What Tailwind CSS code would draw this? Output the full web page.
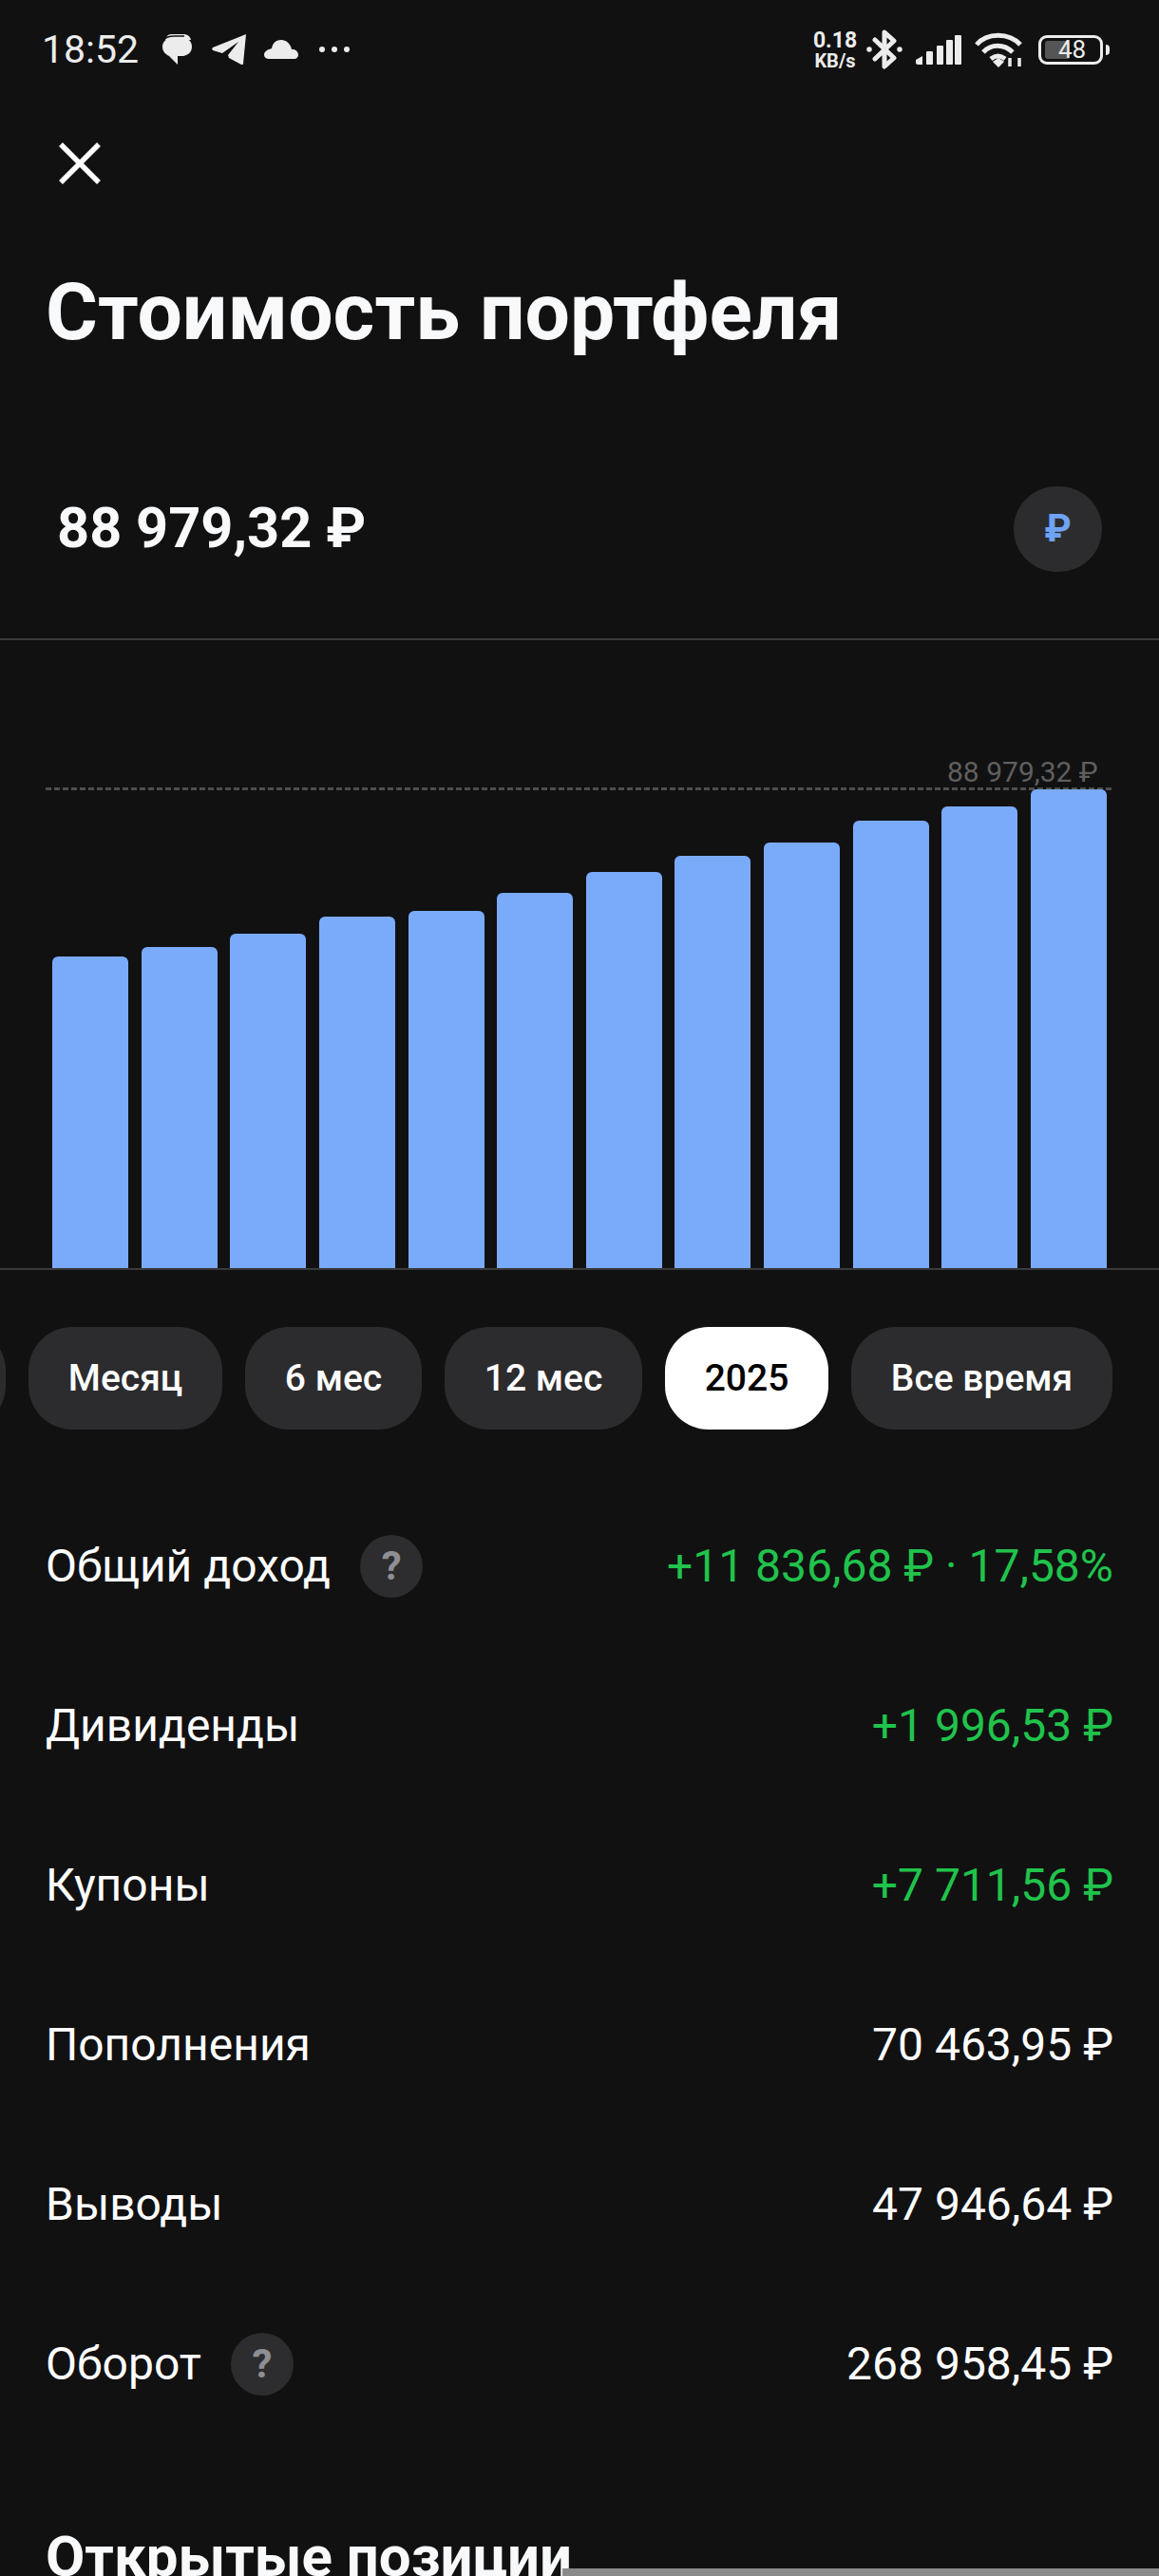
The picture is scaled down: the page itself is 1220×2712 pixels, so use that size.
<!DOCTYPE html>
<html lang="ru">
<head>
  <meta charset="UTF-8" />
  <meta name="viewport" content="width=device-width, initial-scale=1.0"/>
  <title>Стоимость портфеля</title>
  <script src="https://cdn.jsdelivr.net/npm/@tailwindcss/browser@4"></script>
</head>
<body class="bg-[#111112]">
  <div class="relative h-[2712px] w-[1220px] overflow-hidden bg-[#111112] font-[Roboto,sans-serif] text-white">

    <!-- status bar -->
    <div class="flex h-[104px] items-center justify-between pl-[44px] pr-[52px] text-[#ececec]">
      <div class="flex items-center">
        <span class="text-[41px] leading-none">18:52</span>
        <svg class="ml-[25px]" width="31" height="32" viewBox="0 0 31 32" fill="#ececec">
          <path d="M9 0h13c4 0 7 2 8 6H3C4 2 6 0 9 0z"/>
          <path d="M11 3h9c6 0 11 4 11 10s-4 9-9 10h-6v9l-9-9C3 21 0 18 0 13S5 3 11 3z"/>
          <path d="M1 6C4 3 8 2 12 2h11" fill="none" stroke="#111112" stroke-width="1.5"/>
        </svg>
        <svg class="ml-[21px]" width="36" height="32" viewBox="0 0 36 32" fill="#ececec">
          <path d="M36 0L33 31c0 1-1 1-2 1L18 25l-1-3L28 8 11 20 1 17c-1-1-1-2 0-3z"/>
        </svg>
        <svg class="ml-[19px]" width="36" height="20" viewBox="0 0 36 20" fill="#ececec">
          <path d="M5 20h27c2 0 4-2 4-4s-1-5-5-6c-1 0-2 0-2 0C28 4 23 0 18 0c-5 0-9 3-10 9-4 1-8 3-8 7 0 2 2 4 5 4z"/>
        </svg>
        <div class="ml-[22px] flex gap-[7px]">
          <div class="size-[6px] rounded-full bg-[#ececec]"></div>
          <div class="size-[6px] rounded-full bg-[#ececec]"></div>
          <div class="size-[6px] rounded-full bg-[#ececec]"></div>
        </div>
      </div>
      <div class="flex items-center">
        <div class="flex w-[46px] flex-col items-center font-bold">
          <span class="text-[23px] leading-[23px]">0.18</span>
          <span class="text-[20px] leading-[20px]">KB/s</span>
        </div>
        <svg class="ml-[10px]" width="38" height="42" viewBox="0 0 38 42" fill="none" stroke="#ececec" stroke-width="5" stroke-linejoin="round" stroke-linecap="round">
          <path d="M9 11l20 19-10 9V3l10 9L9 31"/>
          <circle cx="3" cy="21" r="1.5" fill="#ececec" stroke-width="2.5"/>
          <circle cx="35" cy="21" r="1.5" fill="#ececec" stroke-width="2.5"/>
        </svg>
        <svg class="ml-[14px]" width="48" height="31" viewBox="0 0 48 31" fill="#ececec">
          <path d="M0 26l7-4v9H2c-1 0-2-1-2-2z"/>
          <rect x="11" y="17" width="7" height="14" rx="1"/>
          <rect x="22" y="11" width="7" height="20" rx="1"/>
          <rect x="32" y="5" width="7" height="26" rx="1"/>
          <rect x="41" y="0" width="7" height="31" rx="1"/>
        </svg>
        <svg class="ml-[14px]" width="51" height="37" viewBox="0 0 51 37" fill="none" stroke="#ececec" stroke-width="5">
          <path d="M2 13C13 0 36 0 48 13"/>
          <path d="M9 21c8-9 22-9 31 0"/>
          <path d="M17 28c5-4 10-4 15 0"/>
          <path d="M19 31l6-4 6 4-6 6z" fill="#ececec" stroke="none"/>
          <path d="M37 27v9M47 27v9" stroke-width="3.5"/>
        </svg>
        <div class="relative ml-[16px] flex h-[31px] w-[68px] items-center justify-center rounded-[9px] border-[3px] border-[#ececec]">
          <div class="absolute bottom-[3px] left-[4px] top-[3px] w-[26px] rounded-[3px] bg-[#555555]"></div>
          <span class="relative ml-[3px] text-[26px] leading-none">48</span>
        </div>
        <div class="ml-[3px] h-[11px] w-[4px] rounded-r-full bg-[#ececec]"></div>
      </div>
    </div>

    <!-- close button -->
    <div class="flex h-[136px] items-center pl-[62px]">
      <svg width="44" height="44" viewBox="0 0 44 44" fill="none" stroke="#ffffff" stroke-width="5.5">
        <path d="M2 2l40 40M42 2L2 42"/>
      </svg>
    </div>

    <h1 class="flex h-[178px] items-center pl-[48px] text-[84px] font-bold leading-none text-[#f8f9fa]">Стоимость портфеля</h1>

    <!-- current value -->
    <div class="flex items-center justify-between pb-[70px] pl-[60px] pr-[60px] pt-[94px]">
      <span class="text-[59.5px] font-bold leading-none text-[#f8f9fa]">88 979,32 ₽</span>
      <div class="flex h-[90px] w-[93px] items-center justify-center rounded-full bg-[#2c2c2e] text-[40px] font-bold text-[#6ea3f5]">₽</div>
    </div>
    <div class="h-[2px] bg-[#3a3a3c]"></div>

    <!-- chart -->
    <div class="relative flex h-[661px] items-end justify-between px-[55px]">
      <span class="absolute left-[997px] top-[124px] text-[30px] leading-none text-[#5f5f5f]">88 979,32 ₽</span>
      <div class="absolute left-[48px] right-[50px] top-[155px] h-[3px] bg-[repeating-linear-gradient(90deg,#4d4d4d_0,#4d4d4d_6px,transparent_6px,transparent_9px)]"></div>
      <div class="h-[328px] w-[80px] rounded-t-[6px] bg-[#7aabfb]"></div>
      <div class="h-[338px] w-[80px] rounded-t-[6px] bg-[#7aabfb]"></div>
      <div class="h-[352px] w-[80px] rounded-t-[6px] bg-[#7aabfb]"></div>
      <div class="h-[370px] w-[80px] rounded-t-[6px] bg-[#7aabfb]"></div>
      <div class="h-[376px] w-[80px] rounded-t-[6px] bg-[#7aabfb]"></div>
      <div class="h-[395px] w-[80px] rounded-t-[6px] bg-[#7aabfb]"></div>
      <div class="h-[417px] w-[80px] rounded-t-[6px] bg-[#7aabfb]"></div>
      <div class="h-[434px] w-[80px] rounded-t-[6px] bg-[#7aabfb]"></div>
      <div class="h-[448px] w-[80px] rounded-t-[6px] bg-[#7aabfb]"></div>
      <div class="h-[471px] w-[80px] rounded-t-[6px] bg-[#7aabfb]"></div>
      <div class="h-[486px] w-[80px] rounded-t-[6px] bg-[#7aabfb]"></div>
      <div class="relative z-10 h-[504px] w-[80px] rounded-t-[6px] bg-[#7aabfb]"></div>
    </div>
    <div class="h-[2px] bg-[#3a3a3c]"></div>

    <!-- period switch -->
    <div class="ml-[-100px] mt-[60px] flex w-[1400px] gap-[24px] text-[39px] font-medium leading-none">
      <div class="h-[108px] w-[106px] rounded-[46px] bg-[#2c2c2e]"></div>
      <div class="flex h-[108px] w-[204px] items-center justify-center rounded-[46px] bg-[#2c2c2e]">Месяц</div>
      <div class="flex h-[108px] w-[186px] items-center justify-center rounded-[46px] bg-[#2c2c2e]">6 мес</div>
      <div class="flex h-[108px] w-[208px] items-center justify-center rounded-[46px] bg-[#2c2c2e]">12 мес</div>
      <div class="flex h-[108px] w-[172px] items-center justify-center rounded-[46px] bg-white text-black">2025</div>
      <div class="flex h-[108px] w-[275px] items-center justify-center rounded-[46px] bg-[#2c2c2e]">Все время</div>
    </div>

    <!-- totals -->
    <div class="mt-[60px] px-[48px] text-[48px] leading-none">
      <div class="flex h-[168px] items-center justify-between">
        <div class="flex items-center">
          <span>Общий доход</span>
          <div class="ml-[31px] flex size-[66px] items-center justify-center rounded-full bg-[#2d2d2f] text-[42px] font-bold text-[#8e8e93]">?</div>
        </div>
        <span class="text-[#20c34b]">+11 836,68 ₽ · 17,58%</span>
      </div>
      <div class="flex h-[168px] items-center justify-between">
        <span>Дивиденды</span>
        <span class="text-[#20c34b]">+1 996,53 ₽</span>
      </div>
      <div class="flex h-[168px] items-center justify-between">
        <span>Купоны</span>
        <span class="text-[#20c34b]">+7 711,56 ₽</span>
      </div>
      <div class="flex h-[168px] items-center justify-between">
        <span>Пополнения</span>
        <span>70 463,95 ₽</span>
      </div>
      <div class="flex h-[168px] items-center justify-between">
        <span>Выводы</span>
        <span>47 946,64 ₽</span>
      </div>
      <div class="flex h-[168px] items-center justify-between">
        <div class="flex items-center">
          <span>Оборот</span>
          <div class="ml-[31px] flex size-[66px] items-center justify-center rounded-full bg-[#2d2d2f] text-[42px] font-bold text-[#8e8e93]">?</div>
        </div>
        <span>268 958,45 ₽</span>
      </div>
    </div>

    <h2 class="mt-[89px] pl-[48px] text-[60px] font-bold leading-none text-[#f8f9fa]">Открытые позиции</h2>

    <!-- scroll handle at the bottom edge -->
    <div class="absolute bottom-0 left-[592px] right-0 h-[8px] bg-[#8a8a8a]"></div>
  </div>
</body>
</html>
